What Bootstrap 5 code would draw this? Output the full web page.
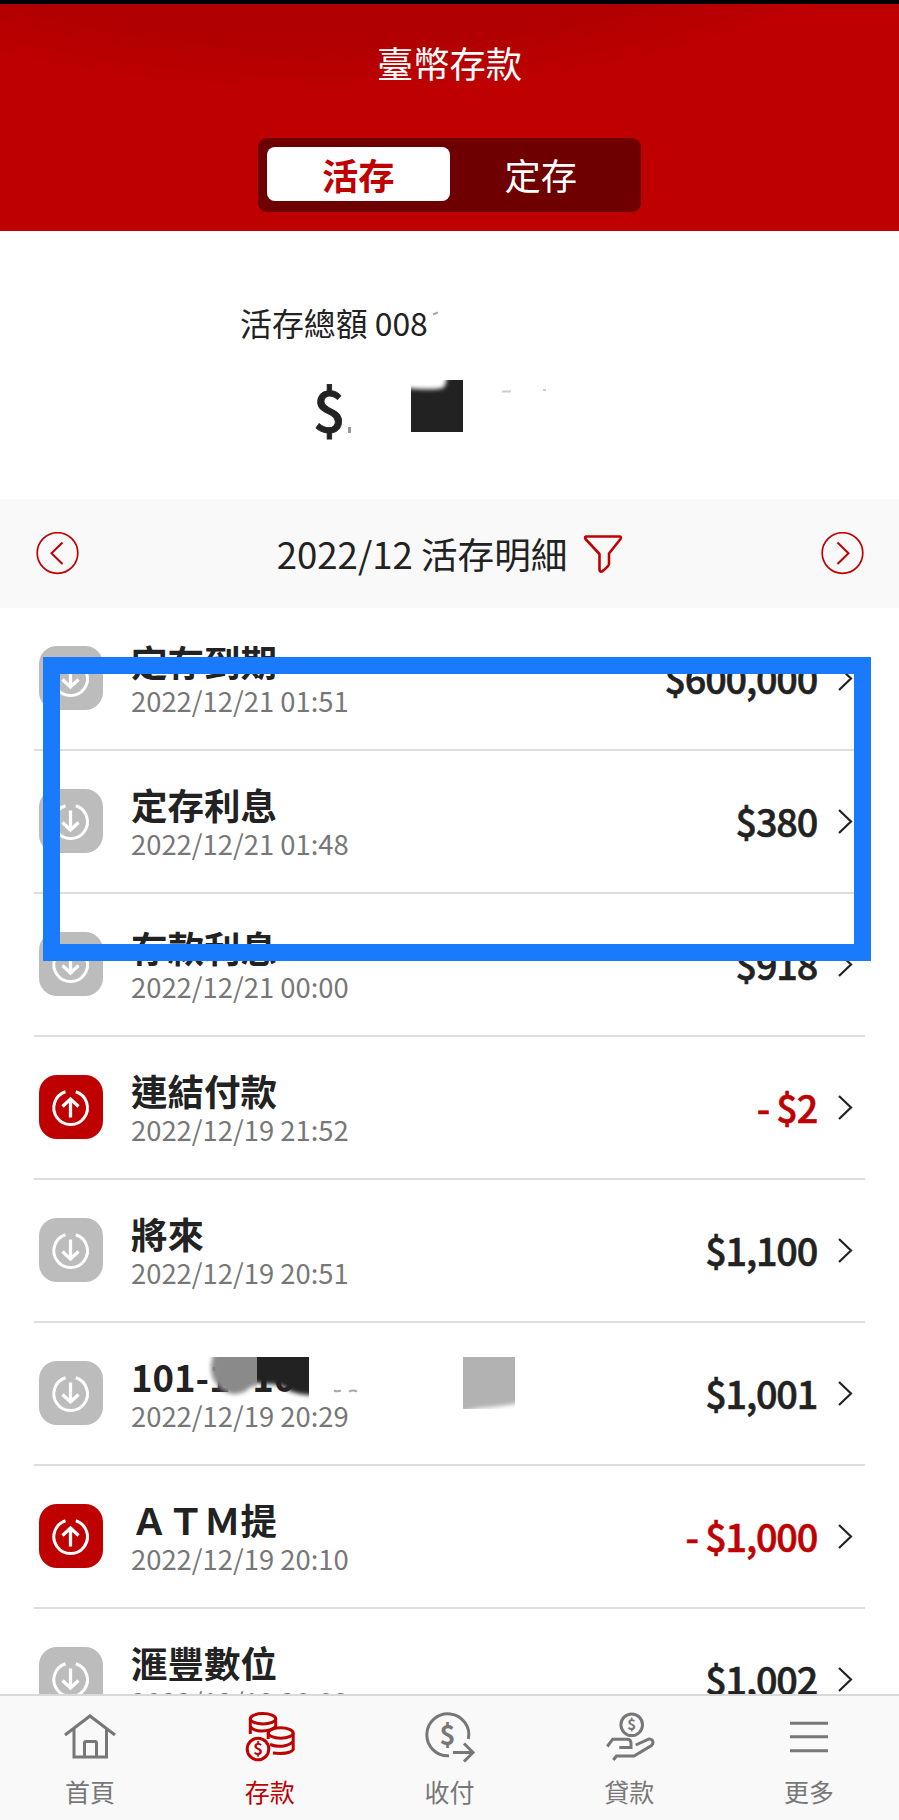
<!DOCTYPE html>
<html lang="zh-Hant">
<head>
<meta charset="utf-8">
<meta name="viewport" content="width=device-width, initial-scale=1">
<title>臺幣存款</title>
<link href="https://cdn.jsdelivr.net/npm/bootstrap@5.3.0/dist/css/bootstrap.min.css" rel="stylesheet">
<style>
body{font-family:"Noto Sans CJK TC",sans-serif;color:#222;height:1820px;overflow:hidden;background:#fff}
.app-screen{height:1820px}
.app-head{height:231px;border-top:4px solid #000;background:#be0001 radial-gradient(ellipse 720px 330px at 330px -240px,#b10001 85%,#be0001 100%);color:#fff}
.app-title{font-size:36.3px;line-height:54px;padding-top:31px;margin-bottom:49px;font-weight:400}
.seg{width:383px;height:74px;background:#6f0001;border-radius:9px;padding:9px}
.seg .nav-link{font-size:36.3px;line-height:54px;height:54px;padding:0;width:183px;border-radius:8px;color:#fff;text-align:center}
.seg .nav-link.active{background:#fff;color:#be0001;font-weight:700}
.total{height:268px}
.total-label{font-size:31.9px;line-height:46px;padding:68px 0 0 240px}
.total-sum{font-size:57px;font-weight:500;line-height:60px;padding:32px 0 0 313px;-webkit-text-stroke:.8px #222}
.month-bar{height:109px;background:#f9f9f9;padding:0 35px 0 36px}
.month-bar h2{font-size:36.6px;line-height:54px;font-weight:400}
.tx-list{padding:0 34px;height:1086px}
.tx{height:142.95px;border-bottom:2px solid #dedede;padding:0 11px 0 5px}
.tx-icon{width:64px;height:64px;border-radius:18px;background:#bcbcbc}
.tx-icon.out{background:#be0001}
.tx-text{margin-left:28px;padding-top:4px}
.tx-name{font-size:36.5px;line-height:40px;font-weight:700;white-space:nowrap}
.tx-date{font-size:27.4px;line-height:37px;color:#777}
.tx-sum{font-size:37.8px;line-height:54px;font-weight:500;letter-spacing:-1.2px;margin-right:21px;-webkit-text-stroke:.6px currentColor}
.tx-sum.out{color:#be0001}
.tabbar{height:126px;background:#f9f9f9;border-top:2px solid #d9d9d9}
.tabbar a{width:20%;color:#777;font-size:25px;line-height:36px;text-decoration:none;padding-top:12px}
.tabbar a.on{color:#be0001}
.tabbar svg{margin-bottom:9px;fill:none;stroke:currentColor;stroke-width:3}
.tabbar text{fill:currentColor;stroke:none;text-anchor:middle;font-weight:700}
.mark-box{left:43px;top:657px;width:828px;height:304px;border:17px solid #197afc}
</style>
</head>
<body>
<svg width="0" height="0" class="position-absolute">
<defs>
<path id="ring" d="M26.500 16.800A16.800 16.800 0 1 0 36.800 16.800" fill="none" stroke="#fff" stroke-width="3"/>
<g id="arr-down"><use href="#ring"/><path d="M31.500 21.500V41M23.500 33.500L31.500 41L39.500 33.500" fill="none" stroke="#fff" stroke-width="3.300"/></g>
<g id="arr-up"><use href="#ring"/><path d="M31.500 42.500V24M23.500 31.500L31.500 24L39.500 31.500" fill="none" stroke="#fff" stroke-width="3.300"/></g>
<path id="chev" d="M1 2L13 13.500L1 25" fill="none" stroke="#222" stroke-width="2.200"/>
</defs>
</svg>
<div class="app-screen position-relative d-flex flex-column overflow-hidden">
<header class="app-head flex-shrink-0 d-flex flex-column align-items-center">
<h1 class="app-title">臺幣存款</h1>
<nav class="seg nav flex-nowrap"><a class="nav-link active">活存</a><a class="nav-link">定存</a></nav>
</header>
<section class="total flex-shrink-0">
<div class="total-label">活存總額 008</div>
<div class="total-sum">$</div>
</section>
<section class="month-bar flex-shrink-0 d-flex align-items-center justify-content-between">
<svg width="43" height="43" fill="none" stroke="#be0001"><circle cx="21.500" cy="21" r="20.300" stroke-width="1.700"/><path d="M26.500 10.500L15.500 21.300L26.500 32" stroke-width="2"/></svg>
<div class="d-flex align-items-center"><h2 class="mb-0">2022/12 活存明細</h2>
<svg class="ms-3" width="40" height="40" fill="none" stroke="#be0001" stroke-width="2.600" stroke-linejoin="round"><path d="M3 2.500H37Q38.500 3 37.500 5L26 19.500V30Q26 32 19 37.500Q16.500 38 16.500 35.500V20L2.500 5Q1.500 3 3 2.500Z"/></svg></div>
<svg width="43" height="43" fill="none" stroke="#be0001"><circle cx="21.500" cy="21" r="20.300" stroke-width="1.700"/><path d="M16.500 10.500L27.500 21.300L16.500 32" stroke-width="2"/></svg>
</section>
<main class="tx-list flex-shrink-0 overflow-hidden">
<div class="tx d-flex align-items-center"><svg class="tx-icon"><use href="#arr-down"/></svg><div class="tx-text"><div class="tx-name">定存到期</div><div class="tx-date">2022/12/21 01:51</div></div><div class="tx-sum ms-auto">$600,000</div><svg width="16" height="27"><use href="#chev"/></svg></div>
<div class="tx d-flex align-items-center"><svg class="tx-icon"><use href="#arr-down"/></svg><div class="tx-text"><div class="tx-name">定存利息</div><div class="tx-date">2022/12/21 01:48</div></div><div class="tx-sum ms-auto">$380</div><svg width="16" height="27"><use href="#chev"/></svg></div>
<div class="tx d-flex align-items-center"><svg class="tx-icon"><use href="#arr-down"/></svg><div class="tx-text"><div class="tx-name">存款利息</div><div class="tx-date">2022/12/21 00:00</div></div><div class="tx-sum ms-auto">$918</div><svg width="16" height="27"><use href="#chev"/></svg></div>
<div class="tx d-flex align-items-center"><svg class="tx-icon out"><use href="#arr-up"/></svg><div class="tx-text"><div class="tx-name">連結付款</div><div class="tx-date">2022/12/19 21:52</div></div><div class="tx-sum out ms-auto">- $2</div><svg width="16" height="27"><use href="#chev"/></svg></div>
<div class="tx d-flex align-items-center"><svg class="tx-icon"><use href="#arr-down"/></svg><div class="tx-text"><div class="tx-name">將來</div><div class="tx-date">2022/12/19 20:51</div></div><div class="tx-sum ms-auto">$1,100</div><svg width="16" height="27"><use href="#chev"/></svg></div>
<div class="tx d-flex align-items-center"><svg class="tx-icon"><use href="#arr-down"/></svg><div class="tx-text"><div class="tx-name">101-1&#8199;10</div><div class="tx-date">2022/12/19 20:29</div></div><div class="tx-sum ms-auto">$1,001</div><svg width="16" height="27"><use href="#chev"/></svg></div>
<div class="tx d-flex align-items-center"><svg class="tx-icon out"><use href="#arr-up"/></svg><div class="tx-text"><div class="tx-name">ＡＴＭ提</div><div class="tx-date">2022/12/19 20:10</div></div><div class="tx-sum out ms-auto">- $1,000</div><svg width="16" height="27"><use href="#chev"/></svg></div>
<div class="tx d-flex align-items-center"><svg class="tx-icon"><use href="#arr-down"/></svg><div class="tx-text"><div class="tx-name">滙豐數位</div><div class="tx-date">2022/12/19 20:09</div></div><div class="tx-sum ms-auto">$1,002</div><svg width="16" height="27"><use href="#chev"/></svg></div>
</main>
<nav class="tabbar flex-shrink-0 d-flex">
<a class="d-flex flex-column align-items-center"><svg width="56" height="56"><path d="M3 27L28 8L53 27M12 21V49H44.500V21M22.500 49V35Q22.500 33.500 24 33.500H33Q34.500 33.500 34.500 35V49"/></svg><span>首頁</span></a>
<a class="on d-flex flex-column align-items-center"><svg width="56" height="56"><ellipse cx="21" cy="10.800" rx="12.700" ry="5.200"/><path d="M8.300 10.800V26M33.700 10.800V19M8.300 18.500C12 24.500 27 24.500 33.700 18.500"/><ellipse cx="38.700" cy="25" rx="12.500" ry="5.200"/><path d="M26.200 25V31M51.200 25V41.500C49 45 40 46 31 45M51.200 33C48 38 37 40 28 36.500"/><circle cx="16" cy="41" r="10.800"/><text x="16" y="47" font-size="16.500">$</text></svg><span>存款</span></a>
<a class="d-flex flex-column align-items-center"><svg width="56" height="56"><path d="M47.400 31A21 21 0 1 0 28 47.800M32 44.500H52M43 35.500L52 44.500L43 53.500"/><text x="26.500" y="36.500" font-size="27">$</text></svg><span>收付</span></a>
<a class="d-flex flex-column align-items-center"><svg width="56" height="56"><circle cx="30.700" cy="16.800" r="10.800"/><text x="30.700" y="22" font-size="15">$</text><path d="M6.300 38.500L11.700 31.200H26Q29.800 31.200 30 35V39.500H18.300M34.700 37L47 31.300C51.500 30 53.500 34.500 50.500 37.500L33 48H15.500L12.300 52"/></svg><span>貸款</span></a>
<a class="d-flex flex-column align-items-center"><svg width="56" height="56"><path d="M9 15.300H47M9 28.800H47M9 42.700H47"/></svg><span>更多</span></a>
</nav>
<div class="mark-box position-absolute"></div>
<svg class="position-absolute top-0 start-0 pe-none" width="899" height="1600">
<defs><filter id="soft" x="-10%" y="-10%" width="120%" height="120%"><feGaussianBlur stdDeviation="2"/></filter>
<clipPath id="cut-a"><rect x="411" y="380" width="52" height="52"/></clipPath>
<clipPath id="cut-b"><rect x="205" y="1357" width="52" height="48"/></clipPath>
<clipPath id="cut-c"><rect x="257" y="1357" width="52" height="48"/></clipPath>
<clipPath id="cut-d"><rect x="463" y="1357" width="52" height="52"/></clipPath></defs>
<g clip-path="url(#cut-a)"><path d="M400 387Q430 391 443 388Q447 386 447 370H475V445H400Z" fill="#222" filter="url(#soft)"/></g>
<g clip-path="url(#cut-b)"><path d="M216 1345H266V1384Q250 1385 246 1391Q233 1398 221 1389Q211 1380 211 1368Q211 1361 216 1345Z" fill="#8a8a8a" filter="url(#soft)"/></g>
<g clip-path="url(#cut-c)"><path d="M245 1345H320V1395Q298 1396 288 1390Q283 1384 268 1384L245 1382Z" fill="#222" filter="url(#soft)"/></g>
<g clip-path="url(#cut-d)"><path d="M450 1345H525V1402Q500 1407 480 1408L450 1414Z" fill="#b2b2b2" filter="url(#soft)"/></g>
<g fill="none" stroke="#aaa" stroke-width="2"><path d="M433 314.500L438 312.500M334 1390.500Q337 1392 341 1390.500M349 1391.500Q353 1389.500 357 1391.500"/><path d="M502 391.500H511M543 390H546" stroke="#ccc"/><path d="M349.500 427V433" stroke="#999" stroke-width="3"/></g>
</svg>
</div>
<script src="https://cdn.jsdelivr.net/npm/bootstrap@5.3.0/dist/js/bootstrap.bundle.min.js"></script>
</body>
</html>
